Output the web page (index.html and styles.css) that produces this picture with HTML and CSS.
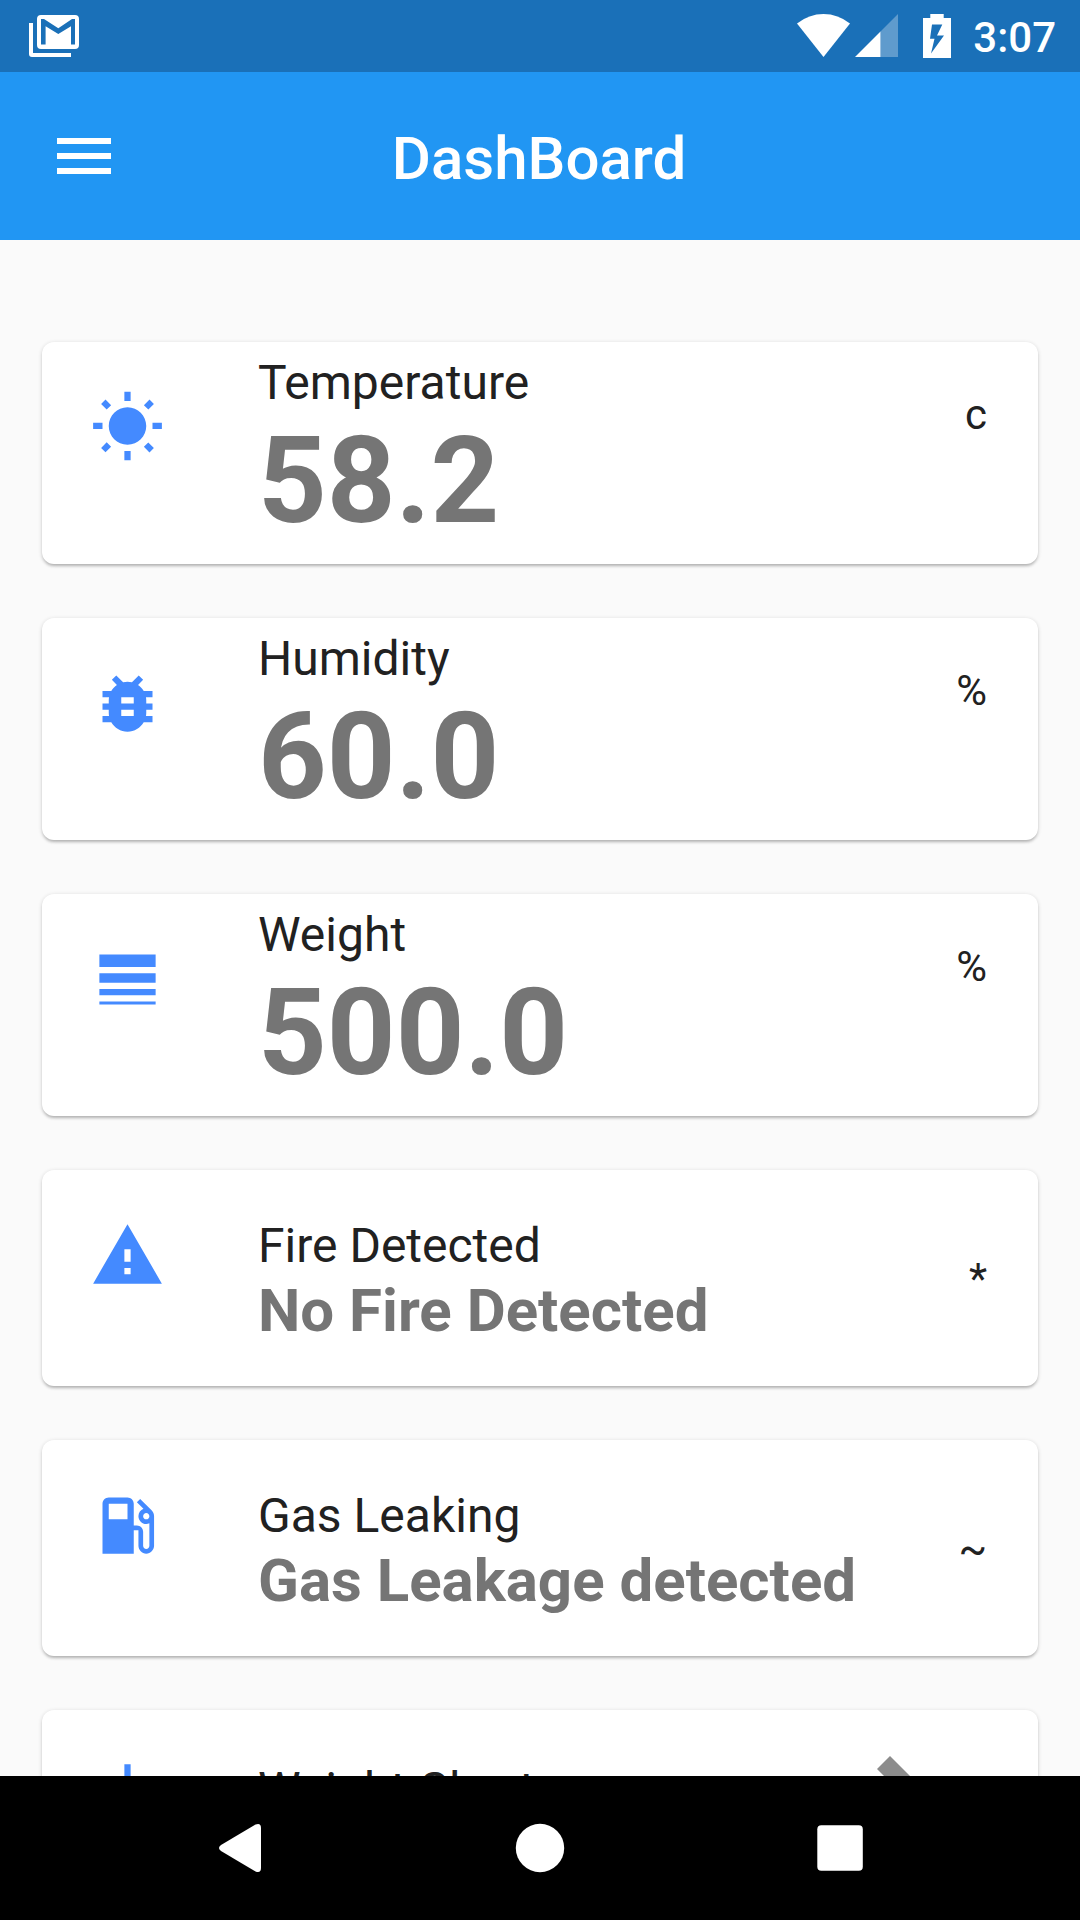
FILE: index.html
```html
<!DOCTYPE html>
<html lang="en">
<head>
<meta charset="utf-8">
<title>DashBoard</title>
<link rel="stylesheet" href="styles.css">
</head>
<body>
<div class="status-bar">
  <svg class="mail-icon" width="50" height="42" viewBox="0 0 50 42"><path fill="#fff" d="M0 8h4v30h38v4H3a3 3 0 0 1-3-3zM12 0h34a4 4 0 0 1 4 4v26a4 4 0 0 1-4 4H12a4 4 0 0 1-4-4V4a4 4 0 0 1 4-4z"/><path fill="#1a70b8" d="M12 4h3l14.3 9.2L43 4h3v25.500h-4V11.200L29.300 19 16.600 11.200V29.500H12z"/></svg>
  <div class="indicators">
    <svg class="wifi" width="53" height="43" viewBox="0 0 53 43"><path fill="#fff" d="M0 9.500Q12 0 26.500 0T53 9.500L26.500 43z"/></svg>
    <svg class="signal" width="43" height="43" viewBox="0 0 43 43"><path fill="#fff" fill-opacity=".3" d="M43 0v43H25.500V17.500z"/><path fill="#fff" d="M0 43h25.500V17.500z"/></svg>
    <svg class="battery" width="28" height="44" viewBox="0 0 28 44"><path fill="#fff" fill-rule="evenodd" d="M7.300 0h13.400v4H28v40H0V4h7.300zM9 10.500L7 24.800h4.500L8 39.500 21 21.500h-7L19.300 10.500z"/></svg>
    <span class="clock">3:07</span>
  </div>
</div>
<header class="app-bar">
  <svg class="menu-icon" width="54" height="36" viewBox="0 0 54 36"><path fill="#fff" d="M0 0h54v6H0zM0 15h54v6H0zM0 30h54v6H0z"/></svg>
  <h1 class="app-title">DashBoard</h1>
</header>
<main class="content">
  <section class="card card-tall">
    <svg class="card-icon" viewBox="0 0 24 24"><path d="M6.76 4.84l-1.8-1.79-1.41 1.41 1.79 1.79 1.42-1.41zM4 10.500H1v2h3v-2zm9-9.950h-2V3.500h2V.55zm7.450 3.910l-1.410-1.410-1.790 1.790 1.410 1.410 1.790-1.790zm-3.210 13.700l1.790 1.800 1.410-1.410-1.800-1.790-1.400 1.400zM20 10.500v2h3v-2h-3zm-8-5c-3.310 0-6 2.690-6 6s2.690 6 6 6 6-2.690 6-6-2.690-6-6-6zm-1 16.950h2V19.500h-2v2.950zm-7.450-3.910l1.410 1.410 1.790-1.800-1.410-1.410-1.790 1.800z"/></svg>
    <div class="card-text"><div class="label">Temperature</div><div class="reading">58.2</div></div>
    <span class="unit">c</span>
  </section>
  <section class="card card-tall">
    <svg class="card-icon" viewBox="0 0 24 24"><path d="M20 8h-2.810c-.45-.78-1.070-1.450-1.820-1.960L17 4.410 15.590 3l-2.170 2.170C12.960 5.060 12.490 5 12 5c-.49 0-.96.06-1.410.17L8.410 3 7 4.410l1.620 1.630C7.880 6.550 7.260 7.220 6.810 8H4v2h2.090c-.05.33-.09.66-.09 1v1H4v2h2v1c0 .34.04.67.09 1H4v2h2.810c1.040 1.790 2.970 3 5.190 3s4.150-1.210 5.190-3H20v-2h-2.090c.05-.33.09-.66.09-1v-1h2v-2h-2v-1c0-.34-.04-.67-.09-1H20V8zm-6 8h-4v-2h4v2zm0-4h-4v-2h4v2z"/></svg>
    <div class="card-text"><div class="label">Humidity</div><div class="reading">60.0</div></div>
    <span class="unit">%</span>
  </section>
  <section class="card card-tall">
    <svg class="card-icon" viewBox="0 0 24 24"><path d="M3 17h18v-2H3v2zm0 3h18v-1H3v1zm0-7h18v-3H3v3zm0-9v4h18V4H3z"/></svg>
    <div class="card-text"><div class="label">Weight</div><div class="reading">500.0</div></div>
    <span class="unit">%</span>
  </section>
  <section class="card">
    <svg class="card-icon" viewBox="0 0 24 24"><path d="M1 21h22L12 2 1 21zm12-3h-2v-2h2v2zm0-4h-2v-4h2v4z"/></svg>
    <div class="card-text"><div class="label">Fire Detected</div><div class="state">No Fire Detected</div></div>
    <span class="unit">*</span>
  </section>
  <section class="card">
    <svg class="card-icon" viewBox="0 0 24 24"><path d="M19.770 7.230l.01-.01-3.720-3.720L15 4.560l2.110 2.110c-.94.36-1.610 1.260-1.610 2.330 0 1.380 1.120 2.500 2.500 2.500.36 0 .69-.08 1-.21v7.210c0 .55-.45 1-1 1s-1-.45-1-1V14c0-1.100-.9-2-2-2h-1V5c0-1.100-.9-2-2-2H6c-1.100 0-2 .9-2 2v16h10v-7.500h1.500v5c0 1.380 1.120 2.500 2.500 2.500s2.500-1.120 2.500-2.500V9c0-.69-.28-1.320-.73-1.770zM12 10H6V5h6v5zm6 0c-.55 0-1-.45-1-1s.45-1 1-1 1 .45 1 1-.45 1-1 1z"/></svg>
    <div class="card-text"><div class="label">Gas Leaking</div><div class="state">Gas Leakage detected</div></div>
    <span class="unit">~</span>
  </section>
  <section class="card card-chart">
    <svg class="card-icon" viewBox="0 0 24 24"><path d="M11 2h2v20h-2z"/></svg>
    <div class="card-text"><div class="label">Weight Chart</div></div>
    <svg class="edit-icon" width="72" height="72" viewBox="0 0 72 72"><path d="M13 0l59 59-13 13L0 13z"/></svg>
  </section>
</main>
<nav class="nav-bar">
  <svg width="1080" height="144" viewBox="0 0 1080 144"><g fill="#fff"><path d="M221 69L255.500 48.500Q261 46.500 261 52V92Q261 97.500 255.500 95.500L221 75Q217 72 221 69z"/><circle cx="540" cy="72" r="24.200"/><rect x="817.300" y="49.200" width="45.500" height="45.500" rx="4"/></g></svg>
</nav>
</body>
</html>
```
FILE: styles.css
```css
* { box-sizing: border-box; }
body {
  margin: 0;
  width: 1080px;
  height: 1920px;
  overflow: hidden;
  display: flex;
  flex-direction: column;
  background: #fafafa;
  font-family: Roboto, sans-serif;
  color: #212121;
}
svg { display: block; flex: none; }
.status-bar {
  flex: none;
  height: 72px;
  padding: 14px 24px 0 29px;
  display: flex;
  justify-content: space-between;
  background: #1a70b8;
}
.mail-icon { margin-top: 1px; }
.indicators { display: flex; align-items: flex-start; }
.signal { margin-left: 5px; }
.battery { margin-left: 25px; }
.clock {
  margin-left: 22px;
  color: #fff;
  font-size: 42px;
  line-height: 48px;
  font-weight: 500;
}
.app-bar {
  flex: none;
  height: 168px;
  padding: 0 57px;
  display: grid;
  grid-template-columns: 54px 1fr 54px;
  align-items: center;
  background: #2196f3;
}
.app-title {
  margin: 0;
  padding: 5px 2px 0 0;
  text-align: center;
  color: #fff;
  font-size: 60px;
  line-height: 70px;
  font-weight: 500;
}
.content {
  flex: 1;
  min-height: 0;
  overflow: hidden;
  padding: 102px 42px 0;
  display: flex;
  flex-direction: column;
  gap: 54px;
}
.card {
  flex: none;
  height: 216px;
  padding: 47.5px 51px 0 48px;
  display: flex;
  align-items: flex-start;
  border-radius: 12px;
  background: #fff;
  box-shadow: 0 3px 3px -1px rgba(0,0,0,.2), 0 1px 4px rgba(0,0,0,.16);
}
.card-tall { height: 222px; padding-top: 12.5px; }
.card-icon {
  width: 75px;
  height: 75px;
  margin-top: .5px;
  fill: #448aff;
}
.card-tall .card-icon { margin-top: 35.5px; }
.card-text { flex: 1; padding-left: 93px; white-space: nowrap; }
.label { font-size: 48px; line-height: 56px; }
.reading {
  color: #757575;
  font-size: 120px;
  line-height: 140px;
  font-weight: 700;
}
.state {
  margin-top: 2px;
  color: #757575;
  font-size: 60px;
  line-height: 70px;
  font-weight: 700;
}
.unit { margin-top: 36px; font-size: 42px; line-height: 49px; }
.card-tall .unit { margin-top: 35.5px; }
.card-chart .label { margin-top: 4.5px; }
.edit-icon { margin: -1.5px 38px 0 0; fill: #8c8c8c; }
.nav-bar { flex: none; height: 144px; background: #000; }
```
